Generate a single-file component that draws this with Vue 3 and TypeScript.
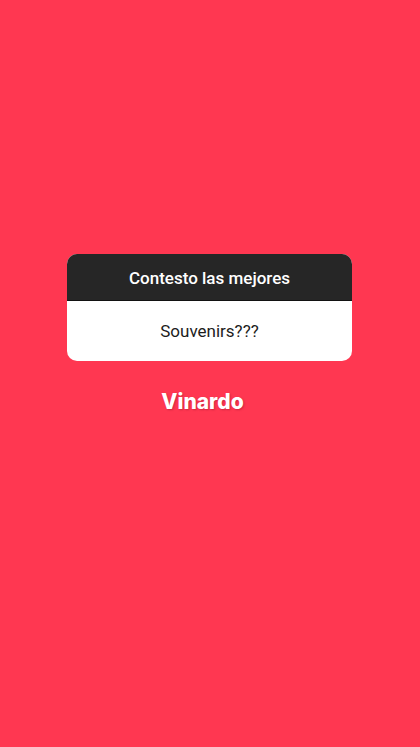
<script setup lang="ts">
const prompt: string = 'Contesto las mejores'
const answer: string = 'Souvenirs???'
const reply: string = 'Vinardo'
</script>

<template>
  <main class="story">
    <section class="card">
      <h1 class="prompt">{{ prompt }}</h1>
      <p class="answer">{{ answer }}</p>
    </section>
    <p class="reply">{{ reply }}</p>
  </main>
</template>

<style>
body {
  margin: 0;
  background: #ff3751;
}
</style>

<style scoped>
.story {
  box-sizing: border-box;
  min-height: 100vh;
  padding: 254px 68px 0 67px;
  background: #ff3751;
  font-family: Inter, "Liberation Sans", sans-serif;
  text-align: center;
}

.card {
  overflow: hidden;
  border-radius: 10px;
  background: #fff;
}

.prompt {
  margin: 0;
  padding: 12px 16px 10px;
  border-bottom: 1px solid #121212;
  background: #262626;
  color: #fff;
  font-family: Roboto, "Liberation Sans", sans-serif;
  font-size: 17px;
  font-weight: 500;
  line-height: 24px;
}

.answer {
  margin: 0;
  padding: 18px 16px;
  color: #1c1c1c;
  font-family: Roboto, "Liberation Sans", sans-serif;
  font-size: 17px;
  font-weight: 400;
  line-height: 24px;
}

.reply {
  margin: 25px 14px 0 0;
  color: #fff;
  font-size: 21px;
  font-weight: 800;
  line-height: 32px;
  text-shadow: 1px 1px 2px rgba(120, 10, 35, 0.35);
}
</style>
